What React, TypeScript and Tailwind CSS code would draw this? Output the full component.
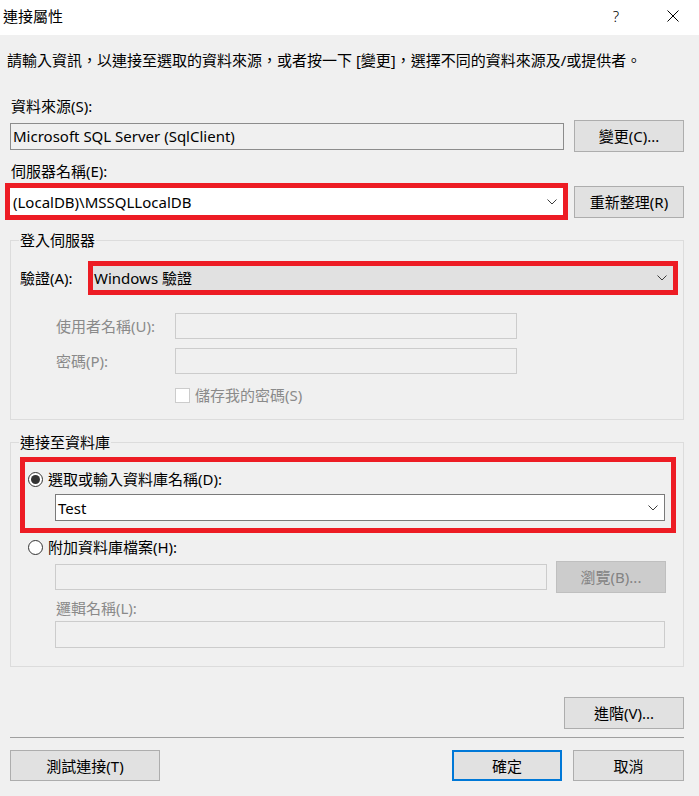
import type { ReactNode } from "react";

const Chevron = () => (
  <svg width="10" height="6" viewBox="0 0 10 6" className="shrink-0">
    <polyline points="0.5,0.5 5,5 9.5,0.5" fill="none" stroke="#3c3c3c" strokeWidth="1" />
  </svg>
);

function Button({ children, className = "" }: { children: ReactNode; className?: string }) {
  return (
    <div
      className={`flex h-[32px] shrink-0 items-center justify-center border border-[#adadad] bg-[#e1e1e1] ${className}`}
    >
      {children}
    </div>
  );
}

function Radio({ checked }: { checked?: boolean }) {
  return (
    <div className="flex size-[15px] shrink-0 items-center justify-center rounded-full border border-[#333] bg-white">
      {checked && <div className="size-[9px] rounded-full bg-[#333]" />}
    </div>
  );
}

export default function App() {
  return (
    <div className="h-[796px] w-[699px] overflow-hidden bg-[#f0f0f0] font-['Noto_Sans','Noto_Sans_CJK_TC',sans-serif] text-[15px] leading-[20px] text-black">
      {/* title bar */}
      <div className="flex h-[35px] items-center bg-white pb-[3px] pl-[3px]">
        <span>連接屬性</span>
        <span className="ml-auto mr-[48px] font-light">?</span>
        <svg width="12" height="12" viewBox="0 0 12 12" className="mr-[20px]">
          <path d="M0.5 0.5 L11.5 11.5 M11.5 0.5 L0.5 11.5" stroke="#000" strokeWidth="1" />
        </svg>
      </div>

      <div className="pl-[10px] pr-[15px]">
        <p className="-ml-[3px] mt-[15px] whitespace-nowrap">
          請輸入資訊，以連接至選取的資料來源，或者按一下 [變更]，選擇不同的資料來源及/或提供者。
        </p>

        <div className="mt-[26px] pl-px">資料來源(S):</div>
        <div className="mt-[4px] flex items-center gap-[10px]">
          <div className="flex h-[27px] w-[554px] items-center border border-[#8c8c8c] bg-[#f0f0f0] pl-[2px]">
            Microsoft SQL Server (SqlClient)
          </div>
          <Button className="w-[110px]">變更(C)...</Button>
        </div>

        <div className="mt-[9px] pl-px">伺服器名稱(E):</div>
        <div className="mt-[2px] flex items-center gap-[6px]">
          <div className="-ml-[5px] w-[563px] border-[5px] border-[#ed1c24]">
            <div className="flex h-[27px] items-center justify-between bg-white pl-[3px] pr-[6px]">
              <span>(LocalDB)\MSSQLLocalDB</span>
              <Chevron />
            </div>
          </div>
          <Button className="w-[110px]">重新整理(R)</Button>
        </div>

        <fieldset className="mt-[10px] border border-[#dcdcdc] px-[9px] pb-[14px]">
          <legend className="-ml-px px-px">登入伺服器</legend>
          <div className="mt-[11px] flex items-center">
            <span className="w-[68px] shrink-0">驗證(A):</span>
            <div className="-mr-[4px] flex-1 border-[5px] border-[#ed1c24]">
              <div className="flex h-[24px] items-center justify-between bg-[#e1e1e1] pl-px pr-[6px]">
                <span>Windows 驗證</span>
                <Chevron />
              </div>
            </div>
          </div>
          <div className="mt-[18px] flex items-center text-[#8a8a8a]">
            <span className="w-[155px] shrink-0 pl-[36px]">使用者名稱(U):</span>
            <div className="h-[26px] w-[342px] border border-[#cccccc] bg-[#f0f0f0]" />
          </div>
          <div className="mt-[9px] flex items-center text-[#8a8a8a]">
            <span className="w-[155px] shrink-0 pl-[36px]">密碼(P):</span>
            <div className="h-[26px] w-[342px] border border-[#cccccc] bg-[#f0f0f0]" />
          </div>
          <div className="mt-[11px] flex items-center gap-[5px] pl-[155px] text-[#8a8a8a]">
            <div className="size-[15px] border border-[#cccccc] bg-white" />
            <span>儲存我的密碼(S)</span>
          </div>
        </fieldset>

        <fieldset className="mt-[12px] border border-[#dcdcdc] px-[9px] pb-[18px]">
          <legend className="-ml-px px-px">連接至資料庫</legend>
          <div className="-mr-[2px] mt-[5px] border-[5px] border-[#ed1c24] pb-[7px] pl-[3px] pt-[7px]">
            <div className="flex h-[20px] items-center gap-[5px]">
              <Radio checked />
              <span>選取或輸入資料庫名稱(D):</span>
            </div>
            <div className="ml-[27px] mr-[6px] mt-[5px] flex h-[27px] items-center justify-between border border-[#7a7a7a] bg-white pl-[2px] pr-[6px]">
              <span>Test</span>
              <Chevron />
            </div>
          </div>
          <div className="mt-[4px] flex h-[20px] items-center gap-[5px] pl-[8px]">
            <Radio />
            <span>附加資料庫檔案(H):</span>
          </div>
          <div className="mt-[4px] flex items-center gap-[9px] pl-[35px]">
            <div className="h-[26px] w-[492px] border border-[#cccccc] bg-[#f0f0f0]" />
            <div className="flex h-[32px] w-[110px] items-center justify-center border border-[#bfbfbf] bg-[#cccccc] text-[#838383]">
              瀏覽(B)...
            </div>
          </div>
          <div className="mt-[5px] pl-[36px] text-[#8a8a8a]">邏輯名稱(L):</div>
          <div className="ml-[35px] mt-[3px] h-[27px] w-[610px] border border-[#cccccc] bg-[#f0f0f0]" />
        </fieldset>

        <div className="mt-[30px] flex justify-end">
          <Button className="w-[120px]">進階(V)...</Button>
        </div>

        <div className="mt-[8px] h-px bg-[#a0a0a0]" />

        <div className="mt-[12px] flex items-center">
          <Button className="!h-[31px] w-[150px]">測試連接(T)</Button>
          <Button className="!h-[31px] ml-auto w-[110px] border-2 !border-[#0078d7]">確定</Button>
          <Button className="!h-[31px] ml-[11px] w-[111px]">取消</Button>
        </div>
      </div>
    </div>
  );
}
